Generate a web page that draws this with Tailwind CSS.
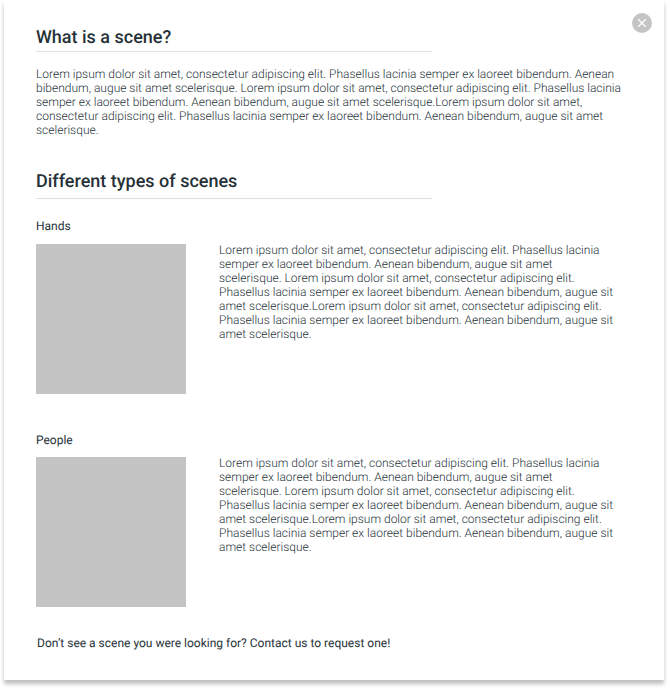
<!DOCTYPE html>
<html lang="en"><head><meta charset="utf-8"><title>Scenes</title>
<script src="https://cdn.jsdelivr.net/npm/@tailwindcss/browser@4"></script></head>
<body class="h-[688px] overflow-hidden bg-white font-[Roboto,sans-serif] text-[#263238] antialiased [text-rendering:geometricPrecision]">
<main class="relative mx-1 h-[680px] w-[660px] bg-white px-8 pt-[25px] shadow-[0_4px_4px_rgba(0,0,0,0.25)]">
<button aria-label="Close" class="absolute top-[13px] right-[12px] size-5"><svg viewBox="0 0 20 20" class="size-5"><circle cx="10" cy="10" r="10" fill="#c4c4c4"/><path d="M6.3 6.3l7.4 7.4M13.7 6.3l-7.4 7.4" stroke="#fff" stroke-width="1.25"/></svg></button>
<h1 class="h-[27px] w-[396px] border-b border-[#e0e0e0] text-[18px] leading-[25px] font-medium">What is a scene?</h1>
<p class="mt-[15px] text-[12px] leading-[14px] font-light whitespace-nowrap">Lorem ipsum dolor sit amet, consectetur adipiscing elit. Phasellus lacinia semper ex laoreet bibendum. Aenean<br>bibendum, augue sit amet scelerisque. Lorem ipsum dolor sit amet, consectetur adipiscing elit. Phasellus lacinia<br>semper ex laoreet bibendum. Aenean bibendum, augue sit amet scelerisque.Lorem ipsum dolor sit amet,<br>consectetur adipiscing elit. Phasellus lacinia semper ex laoreet bibendum. Aenean bibendum, augue sit amet<br>scelerisque.</p>
<h2 class="mt-[32px] h-[30px] w-[396px] border-b border-[#e0e0e0] text-[18px] leading-[25px] font-medium">Different types of scenes</h2>
<section class="pt-[20px]"><h3 class="text-[12px] leading-[14px]">Hands</h3>
<div class="mt-[11px] flex gap-[33px]"><div class="size-[150px] shrink-0 bg-[#c4c4c4]"></div>
<p class="-mt-px text-[12px] leading-[14px] font-light whitespace-nowrap">Lorem ipsum dolor sit amet, consectetur adipiscing elit. Phasellus lacinia<br>semper ex laoreet bibendum. Aenean bibendum, augue sit amet<br>scelerisque. Lorem ipsum dolor sit amet, consectetur adipiscing elit.<br>Phasellus lacinia semper ex laoreet bibendum. Aenean bibendum, augue sit<br>amet scelerisque.Lorem ipsum dolor sit amet, consectetur adipiscing elit.<br>Phasellus lacinia semper ex laoreet bibendum. Aenean bibendum, augue sit<br>amet scelerisque.</p></div></section>
<section class="pt-[39px]"><h3 class="text-[12px] leading-[14px]">People</h3>
<div class="mt-[10px] flex gap-[33px]"><div class="size-[150px] shrink-0 bg-[#c4c4c4]"></div>
<p class="-mt-px text-[12px] leading-[14px] font-light whitespace-nowrap">Lorem ipsum dolor sit amet, consectetur adipiscing elit. Phasellus lacinia<br>semper ex laoreet bibendum. Aenean bibendum, augue sit amet<br>scelerisque. Lorem ipsum dolor sit amet, consectetur adipiscing elit.<br>Phasellus lacinia semper ex laoreet bibendum. Aenean bibendum, augue sit<br>amet scelerisque.Lorem ipsum dolor sit amet, consectetur adipiscing elit.<br>Phasellus lacinia semper ex laoreet bibendum. Aenean bibendum, augue sit<br>amet scelerisque.</p></div></section>
<p class="mt-[29px] ml-px text-[12px] leading-[14px]">Don’t see a scene you were looking for? Contact us to request one!</p>
</main></body></html>
